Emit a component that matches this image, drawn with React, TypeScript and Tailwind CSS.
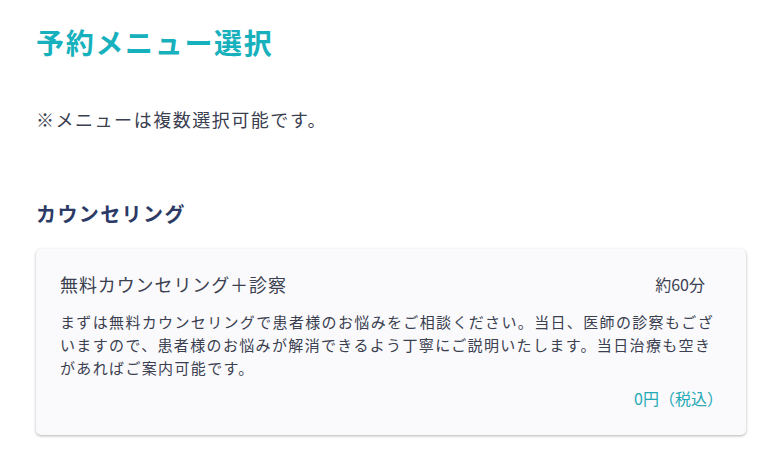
const jp = "font-['Noto_Sans_CJK_JP','Noto_Sans',sans-serif]";

type Menu = {
  name: string;
  time: string;
  desc: string;
  price: string;
};

const counseling: Menu = {
  name: "無料カウンセリング＋診察",
  time: "約60分",
  desc: "まずは無料カウンセリングで患者様のお悩みをご相談ください。当日、医師の診察もございますので、患者様のお悩みが解消できるよう丁寧にご説明いたします。当日治療も空きがあればご案内可能です。",
  price: "0円（税込）",
};

function MenuCard({ menu }: { menu: Menu }) {
  return (
    <div className="rounded-[5px] bg-[#fafafc] pt-[23px] pb-[25px] pl-[24px] pr-[23px] shadow-[0_1px_3px_rgba(0,0,0,0.3)]">
      <div className="flex items-center justify-between">
        <span className="text-[18px] leading-[24px] tracking-[0.05em] text-[#3b4050]">{menu.name}</span>
        <span className="mr-[18px] text-[16px] leading-[24px] text-[#3b4050]">{menu.time}</span>
      </div>
      <p className="mt-[14px] text-[15px] leading-[23px] tracking-[0.09em] text-[#3b4050]">{menu.desc}</p>
      <div className="mt-[8px] text-right text-[16px] leading-[23px] text-[#24a9b5]">{menu.price}</div>
    </div>
  );
}

export default function App() {
  return (
    <div className={`${jp} min-h-screen bg-white pl-[36px] pr-[25px] pt-[22px]`}>
      <h1 className="text-[28px] font-bold leading-[40px] tracking-[0.06em] text-[#17b1bd]">予約メニュー選択</h1>
      <p className="mt-[45px] text-[18px] leading-[24px] tracking-[0.085em] text-[#3b4050]">※メニューは複数選択可能です。</p>
      <h2 className="mt-[69px] text-[20px] font-bold leading-[28px] tracking-[0.07em] text-[#2c3a66]">カウンセリング</h2>
      <div className="mt-[21px]">
        <MenuCard menu={counseling} />
      </div>
    </div>
  );
}
